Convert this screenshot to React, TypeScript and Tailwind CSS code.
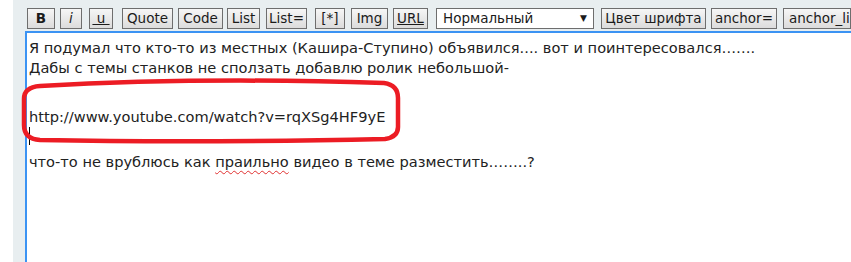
import React from "react";

const font = { fontFamily: '"DejaVu Sans", Verdana, sans-serif' };

function Btn({ w, ml, children, cls = "" }: { w: string; ml: string; children: React.ReactNode; cls?: string }) {
  return (
    <div
      className={`${w} ${ml} h-[21px] shrink-0 border border-[#6e6e6e] bg-gradient-to-b from-[#f6f6f6] to-[#dcdcdc] flex items-center justify-center text-[13.5px] text-[#1b1b1b] leading-none overflow-hidden ${cls}`}
    >
      {children}
    </div>
  );
}

export default function App() {
  return (
    <div className="w-[851px] h-[262px] bg-white flex overflow-hidden" style={font}>
      <div className="w-[13px] shrink-0 bg-white" />
      <div className="flex-1 bg-[#e8eef0] flex flex-col min-w-0">
        <div className="flex items-center pt-[8px] h-[29px] overflow-hidden">
          <Btn w="w-[28px]" ml="ml-[14px]" cls="font-bold">B</Btn>
          <Btn w="w-[22px]" ml="ml-[5px]" cls="italic">i</Btn>
          <Btn w="w-[24px]" ml="ml-[7px]"><span className="underline whitespace-pre">{" u "}</span></Btn>
          <Btn w="w-[51px]" ml="ml-[9px]">Quote</Btn>
          <Btn w="w-[45px]" ml="ml-[5px]">Code</Btn>
          <Btn w="w-[33px]" ml="ml-[4px]">List</Btn>
          <Btn w="w-[41px]" ml="ml-[6px]">List=</Btn>
          <Btn w="w-[30px]" ml="ml-[8px]">[*]</Btn>
          <Btn w="w-[37px]" ml="ml-[6px]">Img</Btn>
          <Btn w="w-[35px]" ml="ml-[5px]"><span className="underline">URL</span></Btn>
          <div className="w-[158px] ml-[8px] h-[21px] shrink-0 border border-[#6e6e6e] bg-white flex items-center justify-between pl-[6px] pr-[6px] text-[13.5px] text-[#1b1b1b]">
            <span>Нормальный</span>
            <span className="text-[9px]">▼</span>
          </div>
          <Btn w="w-[105px]" ml="ml-[7px]">Цвет шрифта</Btn>
          <Btn w="w-[66px]" ml="ml-[5px]">anchor=</Btn>
          <Btn w="w-[68px]" ml="ml-[6px]" cls="justify-start pl-[5px] whitespace-nowrap">anchor_li</Btn>
        </div>
        <div className="relative flex-1 ml-[12px] mt-[2px] border-l-2 border-t-2 border-[#3b93f3] bg-white text-[14.6px] text-[#222] leading-[20px] pl-[2px] pt-[5px]">
          <div className="whitespace-nowrap">Я подумал что кто-то из местных (Кашира-Ступино) объявился.... вот и поинтересовался…….</div>
          <div className="whitespace-nowrap">Дабы с темы станков не сползать добавлю ролик небольшой-</div>
          <div className="whitespace-nowrap mt-[29px]">http://www.youtube.com/watch?v=rqXSg4HF9yE</div>
          <div className="h-[20px] flex items-start">
            <div className="w-[1px] h-[18px] bg-black ml-[0px]" />
          </div>
          <div className="whitespace-nowrap mt-[5px]">
            что-то не врублюсь как{" "}
            <span className="underline decoration-wavy decoration-[#e03030] decoration-1 underline-offset-[3px]">праильно</span>{" "}
            видео в теме разместить……..?
          </div>
        </div>
      </div>
      <svg className="absolute left-0 top-0 pointer-events-none" width="851" height="262">
        <path
          d="M 40 86 Q 200 77 384 83 Q 398 85 398 98 L 398 127 Q 398 137 385 139 Q 200 143 40 140 Q 24 139 24 125 L 24 99 Q 24 87 40 86 Z"
          fill="none"
          stroke="#ec1c24"
          strokeWidth="4.5"
        />
      </svg>
    </div>
  );
}
